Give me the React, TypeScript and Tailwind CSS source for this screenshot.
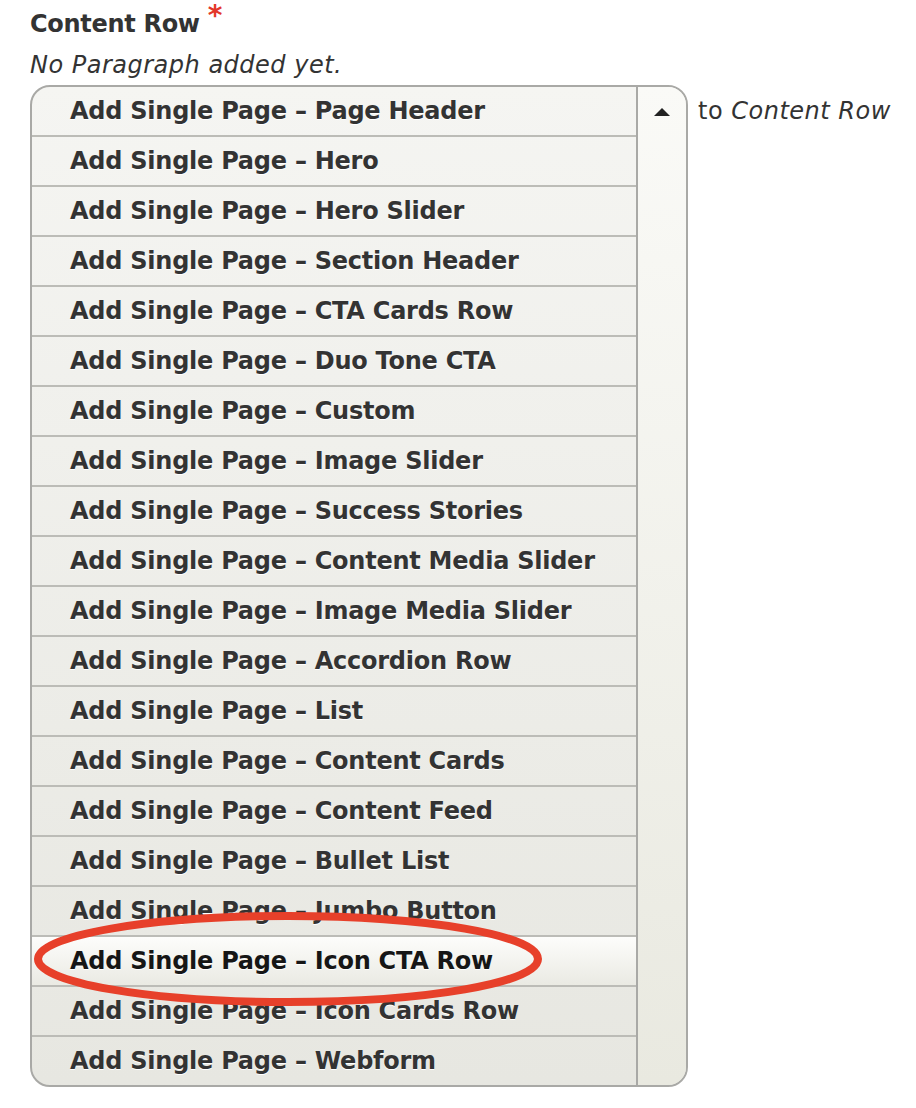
import React from "react";

const items = [
  "Page Header",
  "Hero",
  "Hero Slider",
  "Section Header",
  "CTA Cards Row",
  "Duo Tone CTA",
  "Custom",
  "Image Slider",
  "Success Stories",
  "Content Media Slider",
  "Image Media Slider",
  "Accordion Row",
  "List",
  "Content Cards",
  "Content Feed",
  "Bullet List",
  "Jumbo Button",
  "Icon CTA Row",
  "Icon Cards Row",
  "Webform",
];

const SELECTED = "Icon CTA Row";

export default function App() {
  return (
    <div className="min-h-screen bg-white font-['DejaVu_Sans',sans-serif] text-[#333] pl-[30px] pt-[9px]">
      <h2 className="text-[24px] font-bold leading-[30px] tracking-[-0.3px]">
        Content Row
        <span className="relative -top-[7px] ml-[8px] text-[28px] font-bold leading-none text-[#e3372a]">*</span>
      </h2>
      <p className="mt-[11px] text-[24px] italic leading-[30px] tracking-[0.5px]">
        No Paragraph added yet.
      </p>

      <div className="mt-[5px] flex items-start gap-[10px]">
        <div className="relative">
          <div className="flex w-[658px] overflow-hidden rounded-[20px] border-2 border-[#a9a9a6] bg-gradient-to-b from-[#f5f5f2] to-[#e7e7e1]">
            <ul className="flex-1">
              {items.map((name, i) => {
                const sel = name === SELECTED;
                return (
                  <li
                    key={name}
                    className={
                      "flex items-center pl-[38px] text-[24px] font-bold tracking-[-0.25px] [text-shadow:0_1px_0_#fff] " +
                      (i === 0 ? "h-[48px] " : "h-[50px] border-t-2 border-[#bcbcb7] ") +
                      (sel
                        ? "bg-gradient-to-b from-[#fdfdfb] to-[#eaeae3] text-[#161616]"
                        : "")
                    }
                  >
                    Add Single Page – {name}
                  </li>
                );
              })}
            </ul>
            <div className="w-[50px] border-l-2 border-[#a9a9a6] bg-gradient-to-b from-[#fafaf7] to-[#e9e9e0] flex justify-center pt-[21px]">
              <svg width="16" height="8" viewBox="0 0 16 8">
                <path d="M8 0 L16 8 L0 8 Z" fill="#222" />
              </svg>
            </div>
          </div>

          <svg
            className="absolute left-[1px] top-[826px] pointer-events-none"
            width="520"
            height="100"
            viewBox="0 0 520 100"
          >
            <ellipse
              cx="257"
              cy="48"
              rx="250"
              ry="43"
              fill="none"
              stroke="#e7402a"
              strokeWidth="8"
            />
          </svg>
        </div>

        <p className="pt-[11px] text-[24px] leading-[30px] tracking-[0.5px]">
          to <em>Content Row</em>
        </p>
      </div>
    </div>
  );
}
